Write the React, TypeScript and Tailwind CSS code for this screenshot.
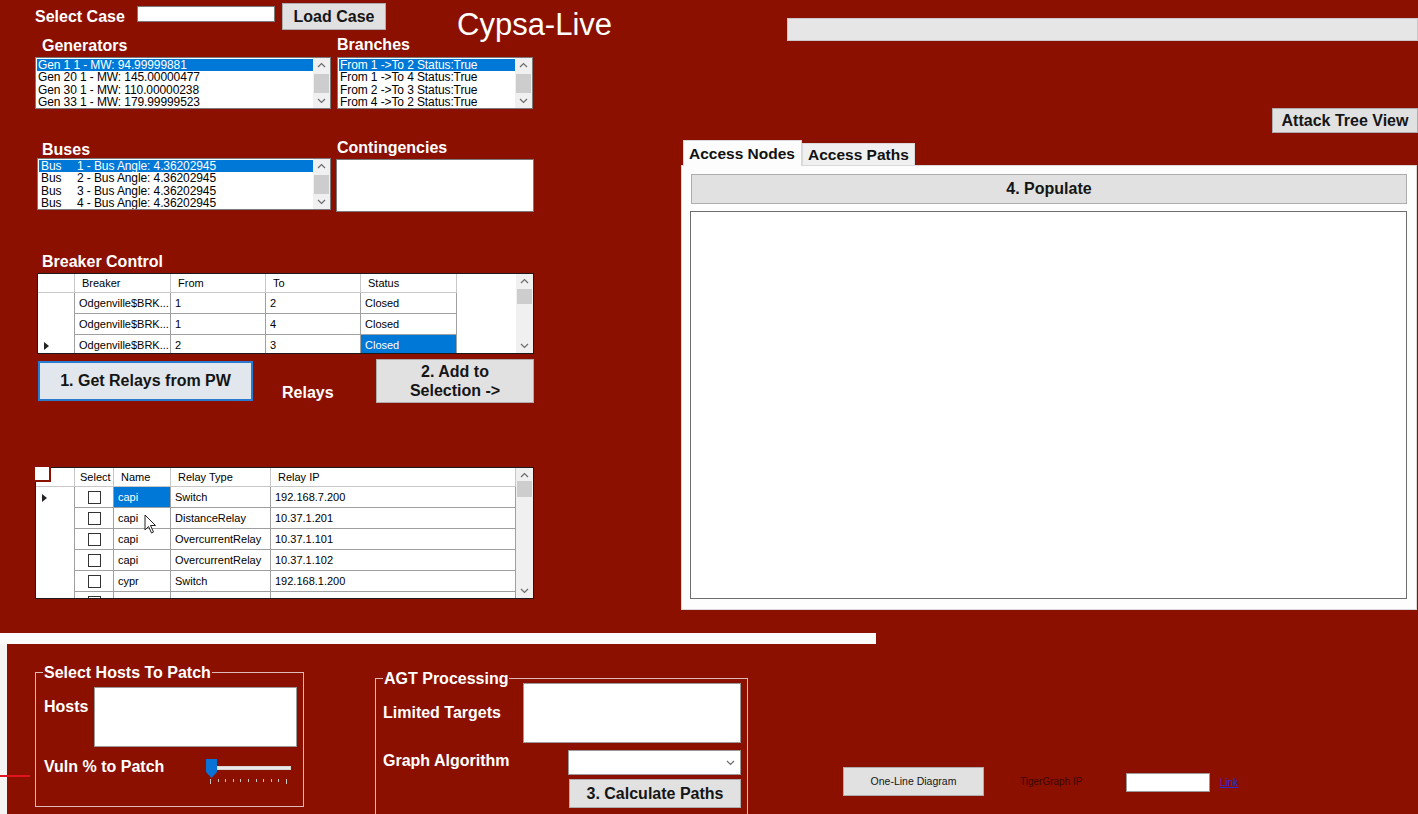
import React from "react";

// WinForms style chrome pieces

function Chevron({ dir }: { dir: "up" | "down" }) {
  return (
    <svg width="9" height="6" viewBox="0 0 9 6" className="shrink-0">
      <polyline
        points={dir === "up" ? "1,5 4.5,1.5 8,5" : "1,1 4.5,4.5 8,1"}
        fill="none"
        stroke="#6a6a6a"
        strokeWidth="1.2"
      />
    </svg>
  );
}

function VScroll({ thumb }: { thumb: string }) {
  return (
    <div className="flex h-full w-[17px] shrink-0 flex-col items-center bg-[#f0f0f0] py-[4px]">
      <Chevron dir="up" />
      <div className={`w-[15px] bg-[#cdcdcd] ${thumb}`} />
      <div className="flex-1" />
      <Chevron dir="down" />
    </div>
  );
}

function ListBox({ rows, width, thumb }: { rows: React.ReactNode[]; width: string; thumb: string }) {
  return (
    <div className={`flex h-[52px] ${width} border border-[#7a7a7a] bg-white`}>
      <div className="flex-1 overflow-hidden pt-[1px] pl-[1px]">
        {rows.map((r, i) => (
          <div
            key={i}
            className={`h-[12.4px] whitespace-nowrap pl-[1px] text-[12px] leading-[12.4px] tracking-[-0.1px] ${
              i === 0 ? "bg-[#0078d7] text-white" : "text-black"
            }`}
          >
            {r}
          </div>
        ))}
      </div>
      <VScroll thumb={thumb} />
    </div>
  );
}

function RowArrow() {
  return (
    <svg width="5" height="8" viewBox="0 0 5 8">
      <polygon points="0,0 5,4 0,8" fill="#222" />
    </svg>
  );
}

function Check() {
  return <div className="h-[13px] w-[13px] border border-[#333] bg-white" />;
}

const label = "text-[16px] font-bold leading-[18px] text-white whitespace-nowrap";
const winBtn = "border border-[#adadad] bg-[#e1e1e1] font-bold text-[#151515]";

const generators = [
  "Gen 1 1 - MW: 94.99999881",
  "Gen 20 1 - MW: 145.00000477",
  "Gen 30 1 - MW: 110.00000238",
  "Gen 33 1 - MW: 179.99999523",
];

const branches = [
  "From 1 ->To 2 Status:True",
  "From 1 ->To 4 Status:True",
  "From 2 ->To 3 Status:True",
  "From 4 ->To 2 Status:True",
];

const buses = [1, 2, 3, 4].map((n) => (
  <>
    <span className="inline-block w-[37px] pl-[1px]">Bus</span>
    {n} - Bus Angle: 4.36202945
  </>
));

const breakers = [
  { from: "1", to: "2" },
  { from: "1", to: "4" },
  { from: "2", to: "3" },
];

const relays = [
  { name: "capi", type: "Switch", ip: "192.168.7.200" },
  { name: "capi", type: "DistanceRelay", ip: "10.37.1.201" },
  { name: "capi", type: "OvercurrentRelay", ip: "10.37.1.101" },
  { name: "capi", type: "OvercurrentRelay", ip: "10.37.1.102" },
  { name: "cypr", type: "Switch", ip: "192.168.1.200" },
  { name: "cypr", type: "DistanceRelay", ip: "10.34.1.201" },
];

const cell = "flex h-full items-center overflow-hidden whitespace-nowrap border-r border-b border-[#a0a0a0] pl-[4px]";
const head = "flex h-full items-center overflow-hidden whitespace-nowrap border-r border-b border-[#c8c8c8] pl-[7px]";

function BreakerGrid() {
  return (
    <div className="ml-[2px] mt-[2px] flex h-[81px] w-[497px] overflow-hidden border border-[#1a1a1a] bg-white text-[11px] text-black">
      <div className="flex flex-1 flex-col overflow-hidden">
        <div className="flex h-[19px] shrink-0">
          <div className="h-full w-[37px] border-r border-b border-[#c8c8c8]" />
          <div className={`${head} w-[96px]`}>Breaker</div>
          <div className={`${head} w-[95px]`}>From</div>
          <div className={`${head} w-[95px]`}>To</div>
          <div className={`${head} w-[96px]`}>Status</div>
        </div>
        {breakers.map((b, i) => (
          <div key={i} className="flex h-[21px] shrink-0">
            <div className="flex h-full w-[37px] items-center border-r border-[#a0a0a0] pl-[6px]">
              {i === 2 && <RowArrow />}
            </div>
            <div className={`${cell} w-[96px]`}>Odgenville$BRK...</div>
            <div className={`${cell} w-[95px]`}>{b.from}</div>
            <div className={`${cell} w-[95px]`}>{b.to}</div>
            <div className={`${cell} w-[96px] ${i === 2 ? "bg-[#0078d7] text-white" : ""}`}>Closed</div>
          </div>
        ))}
      </div>
      <VScroll thumb="mt-[5px] h-[15px]" />
    </div>
  );
}

function RelayGrid() {
  return (
    <div className="relative mt-[64px] flex h-[132px] w-[499px] border border-[#1a1a1a] bg-white text-[11px] text-black">
      <div className="flex flex-1 flex-col overflow-hidden">
        <div className="flex h-[19px] shrink-0">
          <div className="h-full w-[39px] border-r border-b border-[#c8c8c8]" />
          <div className={`${head} w-[39px] !pl-[5px]`}>Select</div>
          <div className={`${head} w-[57px]`}>Name</div>
          <div className={`${head} w-[100px]`}>Relay Type</div>
          <div className={`${head} w-[245px]`}>Relay IP</div>
        </div>
        {relays.map((r, i) => (
          <div key={i} className="flex h-[21px] shrink-0">
            <div className="flex h-full w-[39px] items-center border-r border-[#a0a0a0] pl-[6px]">
              {i === 0 && <RowArrow />}
            </div>
            <div className={`${cell} w-[39px] justify-center !pl-0`}>
              <Check />
            </div>
            <div className={`${cell} w-[57px] ${i === 0 ? "bg-[#0078d7] text-white" : ""}`}>{r.name}</div>
            <div className={`${cell} w-[100px]`}>{r.type}</div>
            <div className={`${cell} w-[245px]`}>{r.ip}</div>
          </div>
        ))}
      </div>
      <VScroll thumb="mt-[3px] h-[16px]" />
      {/* select-all checkbox sitting over the corner */}
      <div className="absolute -left-[1px] -top-[1px] h-[15px] w-[16px] border-r-2 border-b-2 border-[#8c1000] bg-white" />
      {/* mouse pointer */}
      <svg className="absolute left-[108px] top-[46px]" width="13" height="20" viewBox="0 0 13 20">
        <polygon points="1,1 1,16 4.5,12.5 7.5,19 9.5,18 6.5,11.5 11.5,11.5" fill="#fff" stroke="#222" strokeWidth="1" />
      </svg>
    </div>
  );
}

function LeftColumn() {
  return (
    <div className="flex w-[640px] shrink-0 flex-col pl-[35px]">
      <div className="mt-[3px] flex h-[27px] items-start">
        <span className={`${label} mt-[5px] w-[102px]`}>Select Case</span>
        <div className="mt-[3px] h-[16px] w-[138px] border border-[#7a7a7a] bg-white" />
        <button className={`${winBtn} ml-[7px] h-[27px] w-[104px] text-[16px]`}>Load Case</button>
        <h1 className="ml-[71px] mt-[6px] whitespace-nowrap text-[31px] font-normal leading-none text-white">
          Cypsa-Live
        </h1>
      </div>

      <div className="mt-[7px] flex items-start">
        <div className="flex w-[296px] flex-col">
          <span className={`${label} pl-[7px]`}>Generators</span>
          <div className="mt-[2px]">
            <ListBox rows={generators} width="w-[296px]" thumb="mt-[6px] h-[19px]" />
          </div>
        </div>
        <div className="ml-[6px] flex w-[196px] flex-col">
          <span className={`${label} -mt-[1px]`}>Branches</span>
          <div className="mt-[3px]">
            <ListBox rows={branches} width="w-[196px]" thumb="mt-[6px] h-[19px]" />
          </div>
        </div>
      </div>

      <div className="mt-[32px] flex items-start">
        <div className="ml-[2px] flex w-[294px] flex-col">
          <span className={`${label} pl-[5px]`}>Buses</span>
          <div className="-mt-[1px]">
            <ListBox rows={buses} width="w-[294px]" thumb="mt-[6px] h-[19px]" />
          </div>
        </div>
        <div className="ml-[5px] flex w-[198px] flex-col">
          <span className={`${label} -mt-[2px] pl-[1px]`}>Contingencies</span>
          <div className="mt-[2px] h-[53px] w-[198px] border border-[#7a7a7a] bg-white" />
        </div>
      </div>

      <span className={`${label} mt-[41px] pl-[7px]`}>Breaker Control</span>
      <BreakerGrid />

      <div className="mt-[5px] flex items-start">
        <button className="ml-[3px] mt-[2px] h-[40px] w-[215px] border-2 border-[#2a7ad0] bg-[#e2e7ed] text-[16px] font-bold text-[#151515]">
          1. Get Relays from PW
        </button>
        <span className={`${label} ml-[29px] mt-[25px] w-[94px]`}>Relays</span>
        <button className={`${winBtn} h-[44px] w-[158px] text-[16px] leading-[19px]`}>
          2. Add to
          <br />
          Selection -&gt;
        </button>
      </div>

      <RelayGrid />
    </div>
  );
}

function RightColumn() {
  return (
    <div className="flex flex-1 flex-col">
      <div className="ml-[147px] mt-[18px] h-[23px] border border-[#c9c9c9] bg-[#e6e6e6]" />
      <button className={`${winBtn} mt-[67px] h-[25px] w-[146px] self-end text-[16px] leading-none`}>
        Attack Tree View
      </button>
      <div className="ml-[43px] mt-[7px] flex items-end">
        <div className="relative z-10 flex h-[26px] w-[119px] items-center border border-b-0 border-[#d9d9d9] bg-[#fdfdfd] pl-[5px] text-[15.5px] font-bold text-[#111]">
          Access Nodes
        </div>
        <div className="flex h-[23px] w-[113px] items-center border border-b-0 border-[#d9d9d9] bg-[#f0f0f0] pl-[5px] text-[15.5px] font-bold text-[#111]">
          Access Paths
        </div>
      </div>
      <div className="-mt-[1px] ml-[41px] flex h-[445px] w-[736px] flex-col border border-[#d9d9d9] bg-[#fdfdfd] px-[9px] pt-[8px]">
        <button className={`${winBtn} h-[30px] w-full text-[16px]`}>4. Populate</button>
        <div className="-ml-[1px] mt-[7px] h-[388px] w-[717px] border border-[#6e6e6e] bg-white" />
      </div>
    </div>
  );
}

function Slider() {
  const ticks = Array.from({ length: 11 });
  return (
    <div className="mt-[1px] flex flex-col">
      <div className="flex items-start">
        <svg width="11" height="19" viewBox="0 0 11 19">
          <polygon points="0,0 11,0 11,13 5.5,19 0,13" fill="#0a72d6" />
        </svg>
        <div className="mt-[7px] h-[4px] w-[74px] border border-[#d6d6d6] bg-[#e9e9e9]" />
      </div>
      <div className="ml-[4px] mt-[1px] flex gap-[6.6px]">
        {ticks.map((_, i) => (
          <div key={i} className={`w-[1px] bg-[#cfc6c4] ${i === 0 || i === 10 ? "h-[5px]" : "h-[3px]"}`} />
        ))}
      </div>
    </div>
  );
}

function BottomSection() {
  const group = "shrink-0 border border-[#dcbcb6]";
  const legend = "ml-[7px] px-[1px] text-[16px] font-bold leading-[17px] text-white whitespace-nowrap";
  return (
    <div className="relative flex flex-1 items-start">
      <div className="h-full w-[7px] shrink-0 bg-[#f4f4f4]" />

      <fieldset className={`${group} ml-[28px] mt-[20px] h-[143px] w-[269px]`}>
        <legend className={legend}>Select Hosts To Patch</legend>
        <div className="flex items-start pl-[8px]">
          <span className={`${label} mt-[17px] w-[50px]`}>Hosts</span>
          <div className="mt-[6px] h-[60px] w-[203px] border border-[#9a9a9a] bg-white" />
        </div>
        <div className="mt-[11px] flex items-start pl-[8px]">
          <span className={`${label} w-[162px]`}>Vuln % to Patch</span>
          <Slider />
        </div>
      </fieldset>

      <fieldset className={`${group} ml-[71px] mt-[26px] h-[160px] w-[373px]`}>
        <legend className={legend}>AGT Processing</legend>
        <div className="flex items-start pl-[7px]">
          <span className={`${label} mt-[17px] w-[140px]`}>Limited Targets</span>
          <div className="-mt-[4px] h-[60px] w-[218px] border border-[#9a9a9a] bg-white" />
        </div>
        <div className="mt-[7px] flex items-start pl-[7px]">
          <span className={`${label} mt-[2px] w-[185px]`}>Graph Algorithm</span>
          <div className="flex h-[25px] w-[173px] items-center justify-end border border-[#9a9a9a] bg-white pr-[5px]">
            <Chevron dir="down" />
          </div>
        </div>
        <button className={`${winBtn} ml-[193px] mt-[4px] h-[29px] w-[172px] text-[16px]`}>3. Calculate Paths</button>
      </fieldset>

      <button className="ml-[95px] mt-[123px] h-[29px] w-[141px] shrink-0 border border-[#adadad] bg-[#e1e1e1] text-[10.5px] text-[#151515]">
        One-Line Diagram
      </button>
      <span className="ml-[36px] mt-[131px] w-[106px] shrink-0 text-[10px] leading-[13px] text-[#3a0700]">TigerGraph IP</span>
      <div className="mt-[129px] h-[19px] w-[84px] shrink-0 border border-[#9a9a9a] bg-white" />
      <span className="ml-[10px] mt-[132px] text-[10px] leading-[13px] text-[#2b2bd0] underline">Link</span>

      <div className="absolute left-0 top-[131px] h-[2px] w-[30px] bg-[#e2141e]" />
    </div>
  );
}

export default function App() {
  return (
    <div className="relative flex h-[814px] w-[1418px] flex-col overflow-hidden bg-[#8c1000] font-['Liberation_Sans',Arial,sans-serif]">
      <div className="flex h-[633px] shrink-0">
        <LeftColumn />
        <RightColumn />
      </div>
      <div className="h-[11px] w-[876px] shrink-0 bg-[#fbfbfb]" />
      <BottomSection />
    </div>
  );
}
